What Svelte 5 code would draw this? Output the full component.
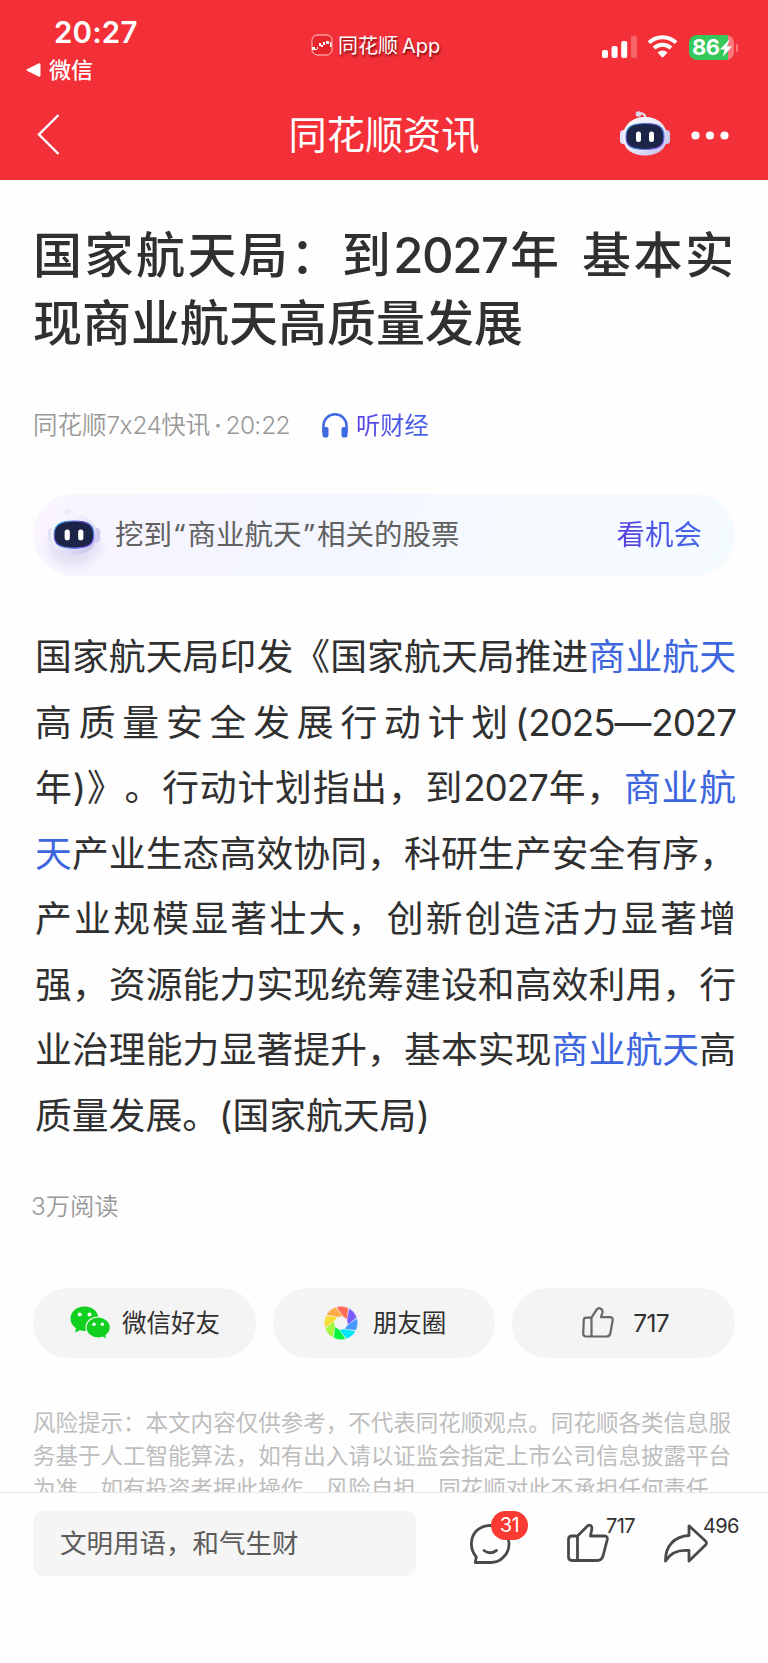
<script>
  const title = ['国家航天局：到2027年 基本实', '现商业航天高质量发展'];
  const body = [
    [{ t: '国家航天局印发《国家航天局推进' }, { t: '商业航天', link: true }],
    [{ t: '高质量安全发展行动计划(2025—2027' }],
    [{ t: '年)》。行动计划指出，到2027年，' }, { t: '商业航', link: true }],
    [{ t: '天', link: true }, { t: '产业生态高效协同，科研生产安全有序，' }],
    [{ t: '产业规模显著壮大，创新创造活力显著增' }],
    [{ t: '强，资源能力实现统筹建设和高效利用，行' }],
    [{ t: '业治理能力显著提升，基本实现' }, { t: '商业航天', link: true }, { t: '高' }],
    [{ t: '质量发展。(国家航天局)' }]
  ];
  const risk = [
    '风险提示：本文内容仅供参考，不代表同花顺观点。同花顺各类信息服',
    '务基于人工智能算法，如有出入请以证监会指定上市公司信息披露平台',
    '为准，如有投资者据此操作，风险自担，同花顺对此不承担任何责任。'
  ];
  const petals = ['#ff6b57', '#7a5cff', '#4499ff', '#00e5fa', '#00f53c', '#a4f83c', '#f6dc36', '#ffab48'];
  // Digit runs are set slightly tighter than the surrounding text.
  const runs = (text) => text.split(/(\d+)/).filter(Boolean);
</script>

{#snippet robot(id)}
  <svg class="robot" viewBox="0 0 50 46" width="50" height="46">
    <defs>
      <linearGradient id="{id}-shell" x1="0" y1="0" x2="1" y2="1">
        <stop offset="0" stop-color="#ffffff" />
        <stop offset=".55" stop-color="#e6e5fa" />
        <stop offset="1" stop-color="#bdbbe8" />
      </linearGradient>
      <linearGradient id="{id}-rim" x1="0" y1="0" x2="1" y2="1">
        <stop offset="0" stop-color="#35c3ee" />
        <stop offset=".35" stop-color="#5f45c8" />
        <stop offset=".65" stop-color="#4b8bf0" />
        <stop offset="1" stop-color="#9a35ea" />
      </linearGradient>
    </defs>
    <g class="antenna">
      <path d="M25 8C26 4 22 3 19 3.500" fill="none" stroke="#e6e4f8" stroke-width="2" />
      <circle cx="18.500" cy="4" r="2.800" fill="#d9d8f3" />
    </g>
    <rect x="0" y="20" width="7" height="14" rx="3.500" fill="#e3e3f8" />
    <rect x="43" y="20" width="7" height="14" rx="3.500" fill="#cbcaee" />
    <path d="M25 7C38 7 47 15 47 27C47 39 38 45.500 25 45.500S3 39 3 27C3 15 12 7 25 7Z" fill="url(#{id}-shell)" />
    <path d="M25 13.500C39 13.500 44 17 44 26.500S39 39.500 25 39.500S6 36 6 26.500S11 13.500 25 13.500Z" fill="#1c2548" stroke="url(#{id}-rim)" stroke-width="1.200" />
    <rect x="16" y="21.500" width="5" height="10.500" rx="2.500" fill="#fff" />
    <rect x="29" y="21.500" width="5" height="10.500" rx="2.500" fill="#fff" />
  </svg>
{/snippet}

{#snippet mixed(text)}{#each runs(text) as run}{#if /\d/.test(run)}<span class="num">{run}</span>{:else}{run}{/if}{/each}{/snippet}

<div class="page">
  <header>
    <div class="status">
      <div class="clock">
        <span class="time">20:27</span>
        <span class="from">
          <svg width="15" height="14" viewBox="0 0 15 14"><path d="M1 6.200L12.500.400Q14.500 0 14.500 1.800V12.200Q14.500 14 12.500 13.600L1 7.800Q-.200 7 1 6.200Z" fill="#fff" /></svg>
          微信
        </span>
      </div>
      <div class="app">
        <svg width="22" height="22" viewBox="0 0 22 22">
          <rect x="1" y="1" width="20" height="20" rx="5.500" fill="#e7252c" stroke="#fa9a9c" stroke-width="1.300" />
          <path d="M1 13h3v2h2v1H1zM6 13h1v2H6zM8 9h2v3H8zM10 11h2v2h-2zM12 8h2v3h-2zM15 7h3v3h-3zM19 8h1.500v5H19z" fill="#fff" />
        </svg>
        <span>同花顺<i></i>App</span>
      </div>
      <div class="signals">
        <svg width="35" height="22" viewBox="0 0 35 22" fill="#fff">
          <rect x="0" y="14" width="6" height="8" rx="2" />
          <rect x="9.600" y="10" width="6" height="12" rx="2" />
          <rect x="19.200" y="5" width="6" height="17" rx="2" />
          <rect x="29" y="0" width="6" height="22" rx="2" opacity=".25" />
        </svg>
        <svg class="wifi" width="31" height="23" viewBox="0 0 31 23">
          <path d="M2 7.700C9.500.300 21.500.300 29 7.700M7 13C11.800 8.500 19.200 8.500 24 13" fill="none" stroke="#fff" stroke-width="4" />
          <path d="M10.500 17.500Q15.500 13.600 20.500 17.500L16.500 21.800Q15.500 23 14.500 21.800Z" fill="#fff" />
        </svg>
        <div class="battery">
          <span>86</span>
          <svg width="12" height="18" viewBox="0 0 12 18"><path d="M9.800 0L0 10.500H4.700L2.500 18L12 7.500H7Z" fill="#fff" /></svg>
        </div>
        <i class="nub"></i>
      </div>
    </div>
    <nav>
      <svg class="back" width="23" height="41" viewBox="0 0 23 41"><path d="M21.500 1L2 20.500L21.500 40" fill="none" stroke="#fff" stroke-width="2.400" /></svg>
      <h2>同花顺资讯</h2>
      <div class="tools">
        {@render robot('top')}
        <svg class="dots" width="38" height="9" viewBox="0 0 38 9" fill="#fff"><circle cx="4.500" cy="4.500" r="4.100" /><circle cx="19" cy="4.500" r="4.100" /><circle cx="33.500" cy="4.500" r="4.100" /></svg>
      </div>
    </nav>
  </header>

  <main>
    <h1>
      {#each title as line, i}<span class="line" class:last={i === title.length - 1}>{@render mixed(line)}</span>{/each}
    </h1>
    <div class="meta">
      <span class="source">{@render mixed('同花顺7x24快讯')}<b>·</b>{@render mixed('20:22')}</span>
      <svg width="26" height="25" viewBox="0 0 26 25">
        <path d="M1.500 20V12.500A11.500 11.200 0 0 1 24.500 12.500V20" fill="none" stroke="#3e6be2" stroke-width="2.600" />
        <rect x=".500" y="14" width="6" height="10.500" rx="2" fill="#3e6be2" />
        <rect x="19.500" y="14" width="6" height="10.500" rx="2" fill="#3e6be2" />
      </svg>
      <span class="listen">听财经</span>
    </div>
    <div class="banner">
      <div class="mascot">{@render robot('banner')}</div>
      <span class="tip">挖到<i class="open">“</i>商业航天<i>”</i>相关的股票</span>
      <span class="go">看机会</span>
    </div>
    <article>
      {#each body as line, i}
        <p class="line" class:last={i === body.length - 1}>{#each line as part}<span class:link={part.link}>{@render mixed(part.t)}</span>{/each}</p>
      {/each}
    </article>
    <div class="reads">3万阅读</div>
    <div class="share">
      <button>
        <svg class="wechat" width="41" height="34" viewBox="0 0 41 34">
          <path d="M14.500.500C22.500.500 28.500 6 28.500 12.500S22.500 25 14.500 25Q12 25 10 24.300L5 26.500L6 22.300C2.500 20 .500 16.500 .500 12.500C.500 6 6.500.500 14.500.500Z" fill="#11d01f" />
          <path d="M28.200 11C35 11 40.300 15.500 40.300 21.500Q40.300 26 36 29.500L37 33.500L32.500 31.200Q30.500 32 28.200 32C21.500 32 16 27.500 16 21.500S21.500 11 28.200 11Z" fill="#11d01f" stroke="#f4f4f4" stroke-width="1.200" />
          <g fill="#fff"><circle cx="9.700" cy="8.500" r="2" /><circle cx="19.500" cy="8.500" r="2" /><circle cx="24" cy="18.300" r="1.700" /><circle cx="32.300" cy="18.300" r="1.700" /></g>
        </svg>
        <span>微信好友</span>
      </button>
      <button class="moments">
        <svg width="34" height="34" viewBox="-17 -17 34 34">
          {#each petals as color, i}
            <path d="M-4.800 -16A16.700 16.700 0 0 1 7.200 -15.100L6.600 -3.400L2.400 -6Z" fill={color} stroke="#f4f4f4" stroke-width=".4" transform="rotate({i * 45})" />
          {/each}
        </svg>
        <span>朋友圈</span>
      </button>
      <button class="like">
        <svg width="32" height="31" viewBox="0 0 32 31" fill="none" stroke="#666" stroke-width="2.200" stroke-linejoin="round">
          <path d="M9.500 10.700L14.500 2.800C16.500-.300 21 1.500 20.500 5.200L19 10.200H28Q31 10.200 30.700 13L28.500 25.500Q28 29.500 24.500 29.500H4Q1.200 29.500 1.200 26.500L1.800 13Q2 10.700 4.300 10.700ZM9.500 10.700V29.500" />
        </svg>
        <span class="num">717</span>
      </button>
    </div>
    <div class="risk">
      {#each risk as line}<p class="line">{line}</p>{/each}
    </div>
  </main>

  <footer>
    <div class="input">文明用语，和气生财</div>
    <div class="action chat">
      <svg width="40" height="40" viewBox="0 0 40 40" fill="none" stroke="#4a4a4a" stroke-width="2.800" stroke-linejoin="round" stroke-linecap="round">
        <path d="M5.200 38.500L6.300 33C-1 24.500.500 13 6.500 6.800C13 0 24 .500 30 4C42 12 41 26 33 33.500Q28.500 38.500 20.500 38.500Z" />
        <path d="M14 26.500Q20 31 26.500 26.500" />
      </svg>
      <em class="badge">31</em>
    </div>
    <div class="action thumb">
      <svg width="42" height="38" viewBox="0 0 42 38" fill="none" stroke="#4a4a4a" stroke-width="2.800" stroke-linejoin="round">
        <path d="M10.500 12L20 2.500C22-.200 25.500 1.500 24.800 5L23.500 12H37Q41 12 40.300 15.500L36 32Q34.500 36.500 30.500 36.500H5Q1.500 36.500 1.500 33V15.500Q1.500 12 5 12ZM10.500 12V36.500" />
      </svg>
      <em>717</em>
    </div>
    <div class="action forward">
      <svg width="44" height="39" viewBox="0 0 44 39" fill="none" stroke="#4a4a4a" stroke-width="2.800" stroke-linejoin="round">
        <path d="M25 1.800L42 17.500Q43 19 42 20.500L25 37V26.500C14 25.500 6.500 28.500 1.500 37C1 22 11 12 25 11.500Z" />
      </svg>
      <em>496</em>
    </div>
  </footer>
</div>

<style>
  :global(body) { margin: 0; background: #fff; }
  .page {
    width: 768px; height: 1663px; display: flex; flex-direction: column; overflow: hidden;
    background: #fefefe; color: #303030; text-spacing-trim: space-all;
    font-family: Inter, "Noto Sans CJK SC", sans-serif;
  }
  svg { display: block; flex: none; overflow: visible; }
  h1, h2, p { margin: 0; font-weight: 400; }
  em, i { font-style: normal; }
  .num { letter-spacing: -.029em; }
  header { height: 180px; flex: none; background: #f33038; color: #fff; }
  .status { height: 92px; display: grid; grid-template-columns: 311px 1fr auto; }
  .clock { display: flex; flex-direction: column; }
  .time { margin: 17px 0 0 54px; font-size: 29.500px; line-height: 30px; font-weight: 600; letter-spacing: .2px; }
  .from { display: flex; align-items: center; gap: 8px; margin: 8px 0 0 26px; font-size: 22px; line-height: 30px; font-weight: 500; }
  .app { display: flex; align-items: center; gap: 5px; height: 89px; font-size: 20px; text-shadow: 1px 2px 2px #7a0d12; }
  .app i { display: inline-block; width: 4px; }
  .signals { display: flex; align-items: flex-start; padding: 36px 30px 0 0; }
  .wifi { margin: -1px 11px 0 10px; }
  .battery {
    width: 45px; height: 25px; margin-top: -1px; border-radius: 8px; display: flex; align-items: center;
    background: linear-gradient(90deg, #34c759 39px, #f8787d 39px); font-size: 22px; font-weight: 700; line-height: 25px;
  }
  .battery span { margin: 0 1px 0 3px; letter-spacing: -.6px; }
  .nub { width: 2px; height: 8px; margin: 8px 0 0 2px; border-radius: 0 3px 3px 0; background: #f8787d; }
  nav { height: 88px; display: grid; grid-template-columns: 1fr auto 1fr; align-items: center; }
  .back { margin: -3px 0 0 37px; }
  h2 { margin: -2px 0 0; font-size: 38.200px; line-height: 50px; }
  .tools { display: flex; align-items: center; gap: 21px; justify-content: flex-end; padding-right: 39px; }
  .tools .robot { margin-top: -6px; }
  .dots { margin-top: -2px; }

  main { height: 1312px; flex: none; overflow: hidden; }
  .line { display: block; white-space: nowrap; text-align: justify; text-align-last: justify; }
  .line.last { text-align-last: left; }
  h1 { margin: 42px 34px 0 33px; font-size: 49px; line-height: 68px; font-weight: 500; word-spacing: 5px; }
  .meta { display: flex; align-items: center; height: 34px; margin: 50px 0 0 33px; font-size: 24.500px; line-height: 34px; color: #999; }
  .source { width: 289px; font-weight: 350; white-space: nowrap; }
  .source b { font-weight: 500; margin: 0 4px; }
  .listen { margin-left: 8px; font-size: 24.300px; background: linear-gradient(90deg, #5a45e8, #4263e6); background-clip: text; color: transparent; }
  .banner {
    display: flex; align-items: center; box-sizing: border-box; width: 702px; height: 82px; margin: 52px 0 0 33px; padding: 0 33px 0 15px;
    border-radius: 41px; background: linear-gradient(110deg, #faf5fe, #f3f5ff 35%, #f5faff 70%, #f4fbff);
    font-size: 28.500px;
  }
  .mascot { width: 52px; margin-top: -8px; filter: drop-shadow(0 12px 5px #b9b6e055); }
  .mascot .robot { width: 52px; height: 48px; }
  .mascot .antenna { opacity: .35; }
  .tip { margin: -5px 0 0 15px; color: #616161; }
  .tip i { display: inline-block; width: 15.500px; text-align: center; font-family: "Noto Sans", sans-serif; }
  .go { margin: -5px 0 0 auto; background: linear-gradient(90deg, #5b3fe0, #3f68ea); background-clip: text; color: transparent; }
  article { margin: 48px 32px 0 35px; font-size: 36.800px; line-height: 65.570px; }
  .link { color: #3d66de; }
  .reads { margin: 40px 0 0 31px; font-size: 24.300px; line-height: 34px; color: #999; font-weight: 350; }
  .share { display: grid; grid-template-columns: repeat(3, 1fr); gap: 17px; margin: 65px 33px 0; }
  button {
    display: flex; align-items: center; height: 70px; padding: 0 0 0 37px; gap: 11px; border: 0; border-radius: 35px;
    background: #f4f4f4; color: #303030; font: inherit; font-size: 24.500px; white-space: nowrap;
  }
  button span { margin-top: -2px; }
  .moments { padding-left: 51px; gap: 15px; }
  .like { padding-left: 70px; gap: 19px; }
  .like span { margin-top: 0; }
  .risk { margin: 48px 37px 0 33px; font-size: 22.500px; line-height: 33px; color: #bdbdbd; font-weight: 350; }

  footer { flex: 1; display: flex; align-items: flex-start; border-top: 1px solid #e9e9e9; background: #fefefe; }
  .input {
    box-sizing: border-box; width: 383px; height: 65px; margin: 18px 0 0 33px; padding-left: 27px; border-radius: 10px;
    background: #f5f5f5; color: #5c5c5c; font-size: 26.500px; line-height: 65px;
  }
  .action { position: relative; margin-top: 31px; }
  .chat { margin-left: 54px; }
  .thumb { margin-left: 57px; }
  .forward { margin-left: 55px; }
  .action em { position: absolute; left: 39px; top: -10px; font-size: 20px; line-height: 25px; letter-spacing: -.6px; color: #303030; }
  .action .badge { left: 21px; top: -13px; width: 37px; height: 29px; border-radius: 15px; background: #fb3a32; color: #fff; line-height: 29px; text-align: center; }
</style>
